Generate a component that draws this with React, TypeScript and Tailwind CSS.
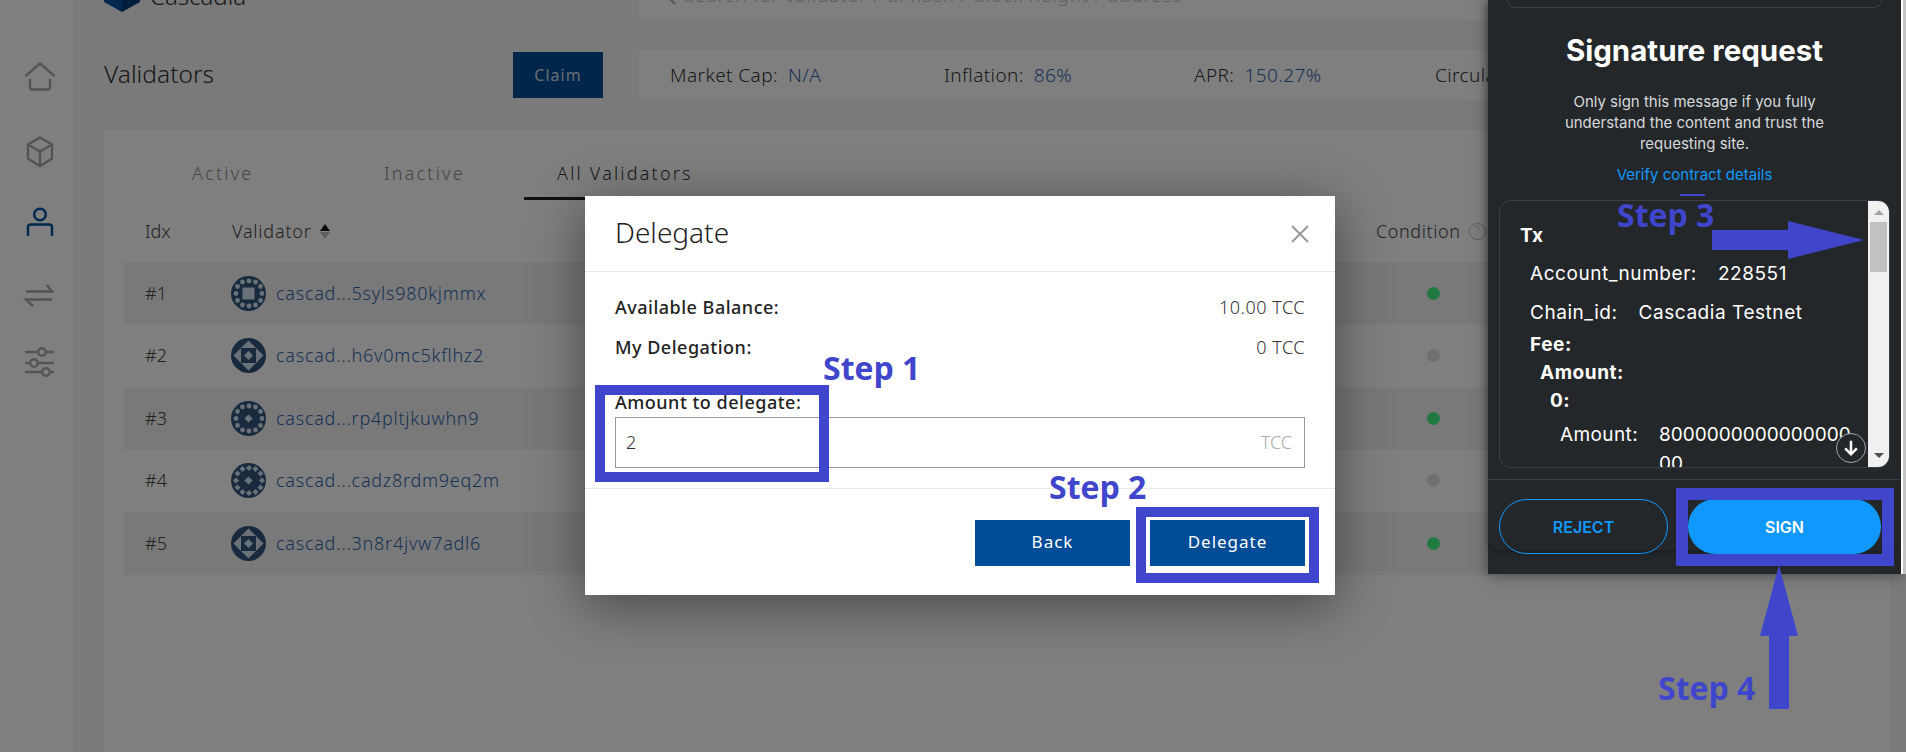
import React from "react";

const page = "font-['Noto_Sans',sans-serif]";
const wallet = "font-['Inter',sans-serif]";

const validators = [
  { idx: "#1", addr: "cascad...5syls980kjmmx", on: true, kind: 1 },
  { idx: "#2", addr: "cascad...h6v0mc5kflhz2", on: false, kind: 2 },
  { idx: "#3", addr: "cascad...rp4pltjkuwhn9", on: true, kind: 3 },
  { idx: "#4", addr: "cascad...cadz8rdm9eq2m", on: false, kind: 4 },
  { idx: "#5", addr: "cascad...3n8r4jvw7adl6", on: true, kind: 5 },
];

const ring = [
  [18, 5], [24.5, 6], [29.5, 10.5], [31, 17.5], [29.5, 24.5], [24.5, 29], [18, 30], [11.5, 29], [6.5, 24.5], [5, 17.5], [6.5, 10.5], [11.5, 6],
];

const Diamond = ({ x, y, r }: { x: number; y: number; r: number }) => (
  <polygon points={`${x},${y - r} ${x + r},${y} ${x},${y + r} ${x - r},${y}`} fill="#d5e3f0" />
);

const Avatar = ({ kind }: { kind: number }) => (
  <svg viewBox="0 0 35 35" className="w-[35px] h-[35px] shrink-0">
    <circle cx="17.5" cy="17.5" r="17.5" fill="#33547e" />
    {kind === 1 && <rect x="11.5" y="11.5" width="12" height="12" fill="#d5e3f0" />}
    {(kind === 1 || kind === 3) && ring.map(([x, y], i) => <circle key={i} cx={x} cy={y} r="2.4" fill="#d5e3f0" />)}
    {kind === 3 && <Diamond x={17.5} y={17.5} r={4} />}
    {kind === 4 && ring.map(([x, y], i) => <Diamond key={i} x={x} y={y} r={3} />)}
    {kind === 4 && <Diamond x={17.5} y={17.5} r={4} />}
    {(kind === 2 || kind === 5) && (
      <g fill="#d5e3f0">
        <polygon points="17.5,2.5 25,10 10,10" />
        <polygon points="17.5,32.5 25,25 10,25" />
        <polygon points="2.5,17.5 10,10 10,25" />
        <polygon points="32.5,17.5 25,10 25,25" />
        <polygon points="17.5,13 22,17.5 17.5,22 13,17.5" />
      </g>
    )}
  </svg>
);

const SideIcon = ({ children, active }: { children: React.ReactNode; active?: boolean }) => (
  <svg
    viewBox="0 0 40 40"
    className={`w-[40px] h-[40px] ${active ? "text-[#00509f]" : "text-[#a8a8a8]"}`}
    fill="none"
    stroke="currentColor"
    strokeWidth="2.4"
  >
    {children}
  </svg>
);

const Sidebar = () => (
  <div className="w-[73px] shrink-0 bg-white flex flex-col items-center pt-[62px] pl-[7px] gap-[30px]">
    <SideIcon>
      <path d="M5.5 14 20 1.5 34.500 14" />
      <path d="M10 17v8.500q0 2 2 2h16q2 0 2-2V17" />
    </SideIcon>
    <SideIcon>
      <path d="M20 5.500 32 12.500v14L20 34 8 26.500v-14Z" />
      <path d="M8 12.500 20 19.500 32 12.500M20 19.500V34" />
    </SideIcon>
    <SideIcon active>
      <circle cx="20" cy="12.500" r="5.800" />
      <path d="M8 34V25q0-2.500 2.500-2.500h19Q32 22.500 32 25v9" />
    </SideIcon>
    <SideIcon>
      <path d="M6 19.500h26L27 13M32 27.500H6l7 6.500" />
    </SideIcon>
    <SideIcon>
      <path d="M5 10h29M5 21h29M5 30h29" />
      <circle cx="22" cy="10" r="3.800" fill="#fff" />
      <circle cx="14" cy="21" r="3.800" fill="#fff" />
      <circle cx="26" cy="30" r="3.800" fill="#fff" />
    </SideIcon>
  </div>
);

const Stat = ({ label, value, width }: { label: string; value?: string; width: string }) => (
  <div className={`${width} shrink-0 flex items-center gap-[10px] whitespace-nowrap text-[19px] font-light tracking-[0.4px] text-[#333]`}>
    <span>{label}</span>
    {value && <span className="text-[#2f65ab]">{value}</span>}
  </div>
);

const Background = () => (
  <div className={`absolute inset-0 flex bg-[#f5f5f5] ${page}`}>
    <Sidebar />
    <div className="flex-1 min-w-0 pl-[31px] pr-[16px] flex flex-col">
      <div className="-mt-[30px] h-[50px] shrink-0 flex">
        <div className="w-[535px] flex items-center gap-[10px] h-[42px]">
          <svg viewBox="0 0 36 42" className="w-[36px] h-[42px]">
            <polygon points="18,42 0,32 0,12 18,22" fill="#00509f" />
            <polygon points="18,42 36,32 36,12 18,22" fill="#003a78" />
          </svg>
          <span className="pt-[10px] text-[24px] font-light text-[#333]">Cascadia</span>
        </div>
        <div className="flex-1 bg-white flex items-center pl-[17px] gap-[8px] text-[#bbb] text-[19px] font-light tracking-[0.8px]">
          <svg viewBox="0 0 20 20" className="w-[20px] h-[20px]" fill="none" stroke="#aaa" strokeWidth="2">
            <circle cx="8" cy="8" r="6" />
            <path d="m13 13 6 6" />
          </svg>
          <span>Search for validator / tx hash / block height / address</span>
        </div>
      </div>

      <div className="mt-[30px] h-[50px] shrink-0 flex items-center">
        <div className="w-[409px] text-[24.5px] font-light text-[#333] -mt-[2px]">Validators</div>
        <div className="w-[90px] h-[46px] bg-[#004c97] text-white/80 flex items-center justify-center text-[16px] tracking-[1px]">Claim</div>
        <div className="ml-[36px] flex-1 min-w-0 h-[50px] bg-white pl-[31px] flex items-center overflow-hidden">
          <Stat label="Market Cap:" value="N/A" width="w-[274px]" />
          <Stat label="Inflation:" value="86%" width="w-[250px]" />
          <Stat label="APR:" value="150.27%" width="w-[241px]" />
          <Stat label="Circulating Supply:" width="w-[200px]" />
        </div>
      </div>

      <div className="mt-[30px] flex-1 bg-white">
        <div className="pl-[55px] pt-[20px] flex text-[18px] font-light tracking-[2.2px] text-[#8c8c8c]">
          <div className="w-[192px] h-[50px] pl-[33px] pb-[3px] flex items-center">Active</div>
          <div className="w-[173px] h-[50px] pl-[33px] pb-[3px] flex items-center">Inactive</div>
          <div className="w-[198px] h-[50px] pl-[33px] flex items-center border-b-[3px] border-[#222] text-[#333] whitespace-nowrap">All Validators</div>
        </div>
        <div className="mx-[20px] text-[#444] text-[18px] font-light">
          <div className="h-[62px] flex items-center">
            <div className="w-[108px] pl-[21px]">Idx</div>
            <div className="w-[1144px] flex items-center gap-[8px] tracking-[0.8px]">
              Validator
              <span className="flex flex-col">
                <span className="w-0 h-0 border-x-[5px] border-x-transparent border-b-[7px] border-b-[#111] mb-[1px]" />
                <span className="w-0 h-0 border-x-[5px] border-x-transparent border-t-[7px] border-t-[#bbb]" />
              </span>
            </div>
            <div className="flex items-center gap-[8px] tracking-[0.6px]">
              Condition
              <span className="w-[17px] h-[17px] rounded-full border-[1.5px] border-[#bbb] text-[#bbb] text-[12px] flex items-center justify-center">?</span>
            </div>
          </div>
          {validators.map((v, i) => (
            <div key={v.idx} className={`h-[62.5px] flex items-center ${i % 2 === 0 ? "bg-[#f2f2f2]" : ""}`}>
              <div className="w-[108px] pl-[21px]">{v.idx}</div>
              <div className="w-[1144px] flex items-center gap-[10px]">
                <div className="-ml-[1px]"><Avatar kind={v.kind} /></div>
                <span className="text-[#2f65ab] tracking-[0.75px]">{v.addr}</span>
              </div>
              <div className="w-[114px] flex justify-center">
                <span className={`w-[13px] h-[13px] rounded-full ${v.on ? "bg-[#41f47f]" : "bg-[#e0e0e0]"}`} />
              </div>
            </div>
          ))}
        </div>
      </div>
    </div>
    <div className="absolute inset-0 bg-black/50" />
  </div>
);

const DelegateModal = () => (
  <div className={`absolute left-[585px] top-[196px] w-[750px] h-[399px] bg-white flex flex-col shadow-[0_10px_50px_rgba(0,0,0,0.45)] ${page}`}>
    <div className="h-[76px] border-b border-[#e8e8e8] pl-[30px] pr-[25px] flex items-center justify-between">
      <span className="text-[28px] font-light text-[#222] -mt-[4px]">Delegate</span>
      <svg viewBox="0 0 20 20" className="w-[20px] h-[20px]" fill="none" stroke="#999" strokeWidth="2">
        <path d="m2 2 16 16M18 2 2 18" />
      </svg>
    </div>
    <div className="flex-1 px-[30px] text-[#333] text-[18px]">
      <div className="mt-[15px] h-[40px] flex items-center justify-between">
        <span className="text-[#222] font-medium tracking-[0.5px]">Available Balance:</span>
        <span className="font-light tracking-[0.5px]">10.00 TCC</span>
      </div>
      <div className="h-[40px] flex items-center justify-between">
        <span className="text-[#222] font-medium tracking-[0.5px]">My Delegation:</span>
        <span className="font-light tracking-[0.5px]">0 TCC</span>
      </div>
      <div className="mt-[22px] leading-[26px] text-[#222] font-medium tracking-[0.5px]">Amount to delegate:</div>
      <div className="mt-[2px] h-[51px] border border-[#999] flex items-center justify-between pl-[10px] pr-[12px]">
        <span className="-mt-[1px] font-light">2</span>
        <span className="text-[#aaa] font-light">TCC</span>
      </div>
    </div>
    <div className="h-[107px] border-t border-[#e8e8e8] pt-[31px] pr-[30px] flex justify-end gap-[20px]">
      <div className="w-[155px] h-[46px] bg-[#004c97] text-white flex items-center justify-center text-[17px] tracking-[1px] pb-[2px]">Back</div>
      <div className="w-[155px] h-[46px] bg-[#004c97] text-white flex items-center justify-center text-[17px] tracking-[1px] pb-[2px]">Delegate</div>
    </div>
  </div>
);

const WalletRow = ({ label, value, indent, bold }: { label: string; value?: string; indent: string; bold?: boolean }) => (
  <div className={`${indent} flex text-[19px] tracking-[0.55px] text-white ${bold ? "font-bold" : ""}`}>
    <span>{label}</span>
    {value && <span className="ml-[21px]">{value}</span>}
  </div>
);

const WalletWindow = () => (
  <div className={`absolute left-[1488px] top-0 w-[413px] h-[574px] bg-[#24272a] shadow-[0_0_14px_rgba(0,0,0,0.5)] ${wallet}`}>
    <div className="h-[550px] rounded-b-[12px] shadow-[0_2px_6px_rgba(0,0,0,0.3)] flex flex-col items-center">
      <div className="w-[375px] h-[8px] border-x border-b border-[#3b4046] rounded-b-[20px] shrink-0" />
      <div className="mt-[23px] text-[29.5px] leading-[38px] font-bold text-white">Signature request</div>
      <div className="mt-[22px] w-[280px] text-center text-[15px] leading-[21px] text-[#d6d9dc]">
        Only sign this message if you fully understand the content and trust the requesting site.
      </div>
      <div className="mt-[10px] text-[15px] leading-[21px] text-[#1098fc]">Verify contract details</div>
      <div className="mt-[15px] w-[391px] h-[268px] shrink-0 border border-[#3b4046] rounded-[12px] overflow-hidden flex relative">
        <div className="flex-1 min-w-0 pt-[23px]">
          <div className="pl-[20px] text-[19px] font-bold text-white leading-[24px]">Tx</div>
          <div className="mt-[14px] leading-[24px]"><WalletRow label="Account_number:" value="228551" indent="pl-[30px]" /></div>
          <div className="mt-[15px] leading-[24px]"><WalletRow label="Chain_id:" value="Cascadia Testnet" indent="pl-[30px]" /></div>
          <div className="mt-[8px] leading-[24px]"><WalletRow label="Fee:" indent="pl-[30px]" bold /></div>
          <div className="mt-[4px] leading-[24px]"><WalletRow label="Amount:" indent="pl-[40px]" bold /></div>
          <div className="mt-[4px] leading-[24px]"><WalletRow label="0:" indent="pl-[50px]" bold /></div>
          <div className="mt-[7px] pl-[60px] flex text-[19px] leading-[29px] text-white">
            <span className="tracking-[0.4px]">Amount:</span>
            <span className="ml-[21px] w-[192px] break-all">800000000000000000</span>
          </div>
          <div className="absolute right-[23px] bottom-[4px] w-[30px] h-[30px] rounded-full border border-[#9fa6ae] bg-[#24272a] flex items-center justify-center">
            <svg viewBox="0 0 20 20" className="w-[18px] h-[18px]" fill="none" stroke="#fff" strokeWidth="2.800">
              <path d="M10 2v15M3.500 10.500 10 17l6.500-6.500" />
            </svg>
          </div>
        </div>
        <div className="w-[21px] shrink-0 bg-[#f1f1f1] flex flex-col items-center relative">
          <span className="mt-[9px] w-0 h-0 border-x-[5px] border-x-transparent border-b-[5px] border-b-[#a3a3a3]" />
          <span className="mt-[7px] w-[17px] h-[50px] bg-[#c1c1c1]" />
          <span className="absolute bottom-[9px] w-0 h-0 border-x-[5px] border-x-transparent border-t-[5px] border-t-[#505050]" />
        </div>
      </div>
      <div className="mt-[11px] w-full border-t border-[#3b4046] pt-[19px] pl-[11px] flex gap-[20px]">
        <div className="w-[169px] h-[55px] rounded-full border border-[#1098fc] flex items-center justify-center text-[#1098fc] text-[16px] font-semibold">REJECT</div>
        <div className="w-[193px] h-[55px] rounded-full bg-[#1098fc] flex items-center justify-center text-white text-[16px] font-semibold">SIGN</div>
      </div>
    </div>
    <div className="absolute left-[413px] top-0 h-[574px] w-[2px] bg-white" />
    <div className="absolute left-[415px] top-0 h-[574px] w-[3px] bg-[#c4c4c4]" />
  </div>
);

const StepLabel = ({ text, pos }: { text: string; pos: string }) => (
  <div className={`absolute ${pos} font-['Open_Sans',sans-serif] font-bold text-[32px] leading-[40px] text-[#3f46cc] whitespace-nowrap`}>{text}</div>
);

const Annotations = () => (
  <>
    <StepLabel text="Step 1" pos="left-[823px] top-[348px]" />
    <StepLabel text="Step 2" pos="left-[1049px] top-[467px]" />
    <StepLabel text="Step 3" pos="left-[1617px] top-[195px]" />
    <StepLabel text="Step 4" pos="left-[1658px] top-[668px]" />
    <div className="absolute left-[595px] top-[385px] w-[234px] h-[97px] border-[10px] border-[#3f46cc]" />
    <div className="absolute left-[1136px] top-[507px] w-[183px] h-[76px] border-[10px] border-[#3f46cc]" />
    <div className="absolute left-[1676px] top-[488px] w-[218px] h-[78px] border-[12px] border-[#3f46cc]" />
    <div className="absolute left-[1680px] top-[194px] w-[25px] h-[2px] bg-[#3f46cc]" />
    <svg className="absolute left-[1712px] top-[221px] w-[152px] h-[38px]" viewBox="0 0 152 38">
      <polygon points="0,9 76,9 76,0 152,19 76,38 76,29 0,29" fill="#3f46cc" />
    </svg>
    <svg className="absolute left-[1760px] top-[565px] w-[38px] h-[144px]" viewBox="0 0 38 144">
      <polygon points="19,0 38,71 29,71 29,144 9,144 9,71 0,71" fill="#3f46cc" />
    </svg>
  </>
);

export default function App() {
  return (
    <div className="relative w-[1906px] h-[752px] overflow-hidden">
      <Background />
      <DelegateModal />
      <WalletWindow />
      <Annotations />
    </div>
  );
}
